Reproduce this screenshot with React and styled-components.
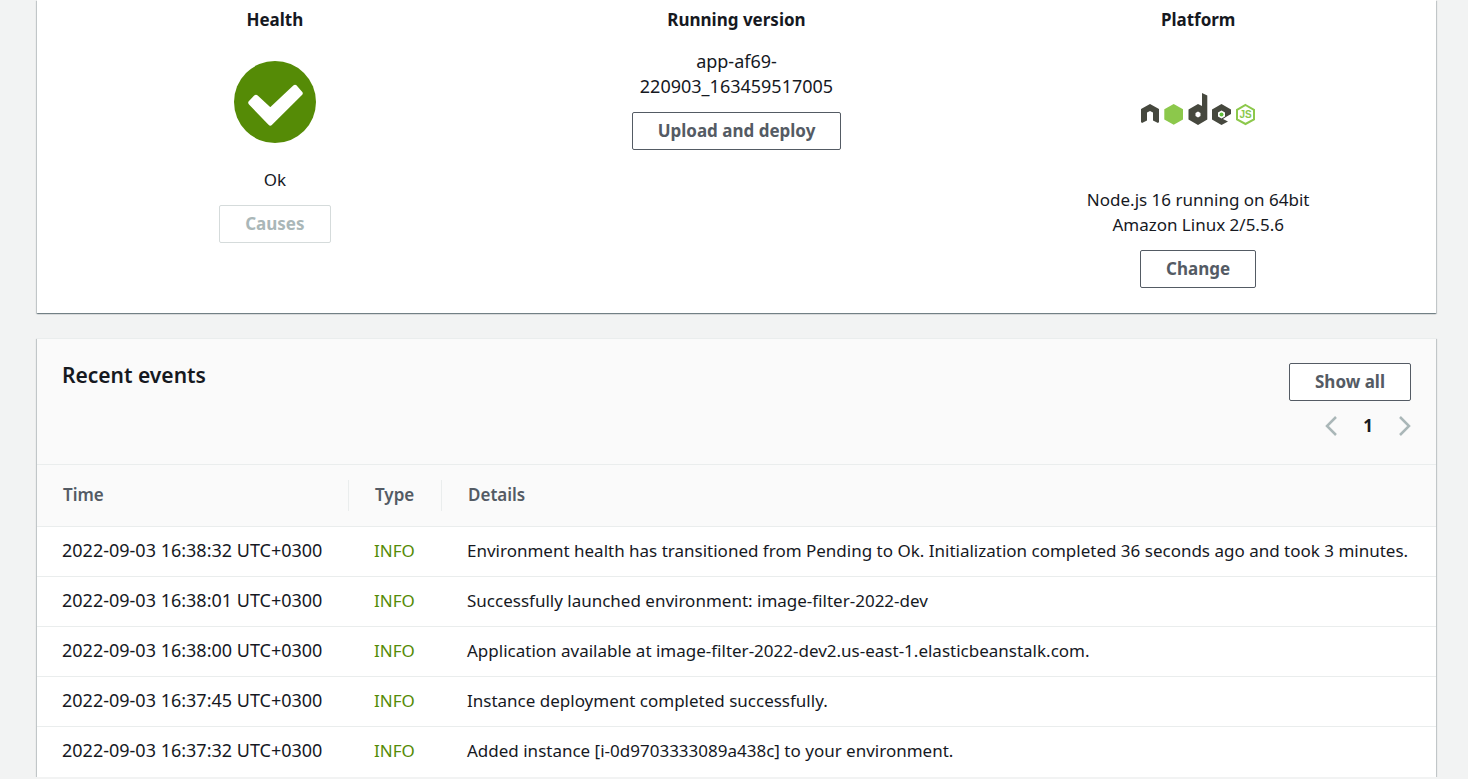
import React from 'react';
import styled, { createGlobalStyle } from 'styled-components';

const GlobalStyle = createGlobalStyle`
  *, *::before, *::after { box-sizing: border-box; }
  body {
    margin: 0;
    background: #f2f3f3;
    color: #16191f;
    font-family: "Noto Sans", "Open Sans", sans-serif;
    font-size: 17px;
    line-height: 25px;
  }
`;

const Page = styled.main`
  display: flex;
  flex-direction: column;
  gap: 25px;
  padding: 0 32px 0 37px;
`;

const Panel = styled.section`
  background: #fff;
  box-shadow: 0 1px 1px 0 rgba(0, 28, 36, 0.35),
    1px 1px 1px 0 rgba(0, 28, 36, 0.15),
    -1px 1px 1px 0 rgba(0, 28, 36, 0.15);
`;

const Overview = styled(Panel)`
  display: grid;
  grid-template-columns: repeat(3, 1fr);
  gap: 36px;
  padding: 7px 25px 25px;
`;

const EventsPanel = styled(Panel)`
  border-top: 1px solid #eaeded;
`;

const Summary = styled.div`
  display: flex;
  flex-direction: column;
  align-items: center;
  text-align: center;
`;

const SummaryTitle = styled.h3`
  margin: 0 0 17px;
  font-size: 17px;
  font-weight: 700;
  line-height: 25px;
`;

const Visual = styled.div`
  padding: 12px 0 24px;
  svg { display: block; }
`;

const SummaryText = styled.p`
  margin: 0 0 13px;
  max-width: 240px;
  font-size: ${(p) => (p.$numeric ? '18px' : '17px')};
`;

const Button = styled.button`
  height: 38px;
  padding: 0 25px;
  border: 1px solid #545b64;
  border-radius: 2px;
  background: #fff;
  color: #545b64;
  font: inherit;
  font-weight: 700;
  line-height: 34px;
  &:disabled {
    border-color: #d5dbdb;
    color: #aab7b8;
  }
`;

const EventsHeader = styled.header`
  display: flex;
  justify-content: space-between;
  align-items: flex-start;
  padding: 24px 25px 26px;
  background: #fafafa;
  border-bottom: 1px solid #eaeded;
`;

const EventsTitle = styled.h2`
  margin: 0;
  font-size: 21px;
  font-weight: 600;
  line-height: 25px;
`;

const Actions = styled.div`
  display: flex;
  flex-direction: column;
  align-items: flex-end;
  gap: 12px;
`;

const Pagination = styled.nav`
  display: flex;
  align-items: center;
  gap: 26px;
  font-weight: 700;
`;

const PageArrow = styled.button`
  display: flex;
  padding: 0;
  border: 0;
  background: none;
  color: #aab7b8;
`;

const Table = styled.table`
  width: 100%;
  table-layout: fixed;
  border-collapse: separate;
  border-spacing: 0;
`;

const HeadCell = styled.th`
  width: ${(p) => p.$width || 'auto'};
  padding: 15px 0;
  background: #fafafa;
  border-bottom: 1px solid #eaeded;
  text-align: left;
  font-weight: 600;
  color: #545b64;
`;

const HeadLabel = styled.div`
  padding: 0 0 2px 26px;
  line-height: 29px;
  border-right: ${(p) => (p.$divided ? '1px solid #eaeded' : '0')};
`;

const Cell = styled.td`
  height: 50px;
  padding: 0 0 2px 25px;
  border-bottom: 1px solid #eaeded;
  white-space: nowrap;
  font-size: ${(p) => (p.$numeric ? '18px' : '17px')};
  color: ${(p) => (p.$info ? '#558b06' : 'inherit')};
  tr:last-child > & { border-bottom-color: transparent; }
`;

const CheckIcon = () => (
  <svg width="82" height="82" viewBox="0 0 82 82" aria-hidden="true">
    <circle cx="41" cy="41" r="41" fill="#558b06" />
    <path
      d="M16.800 41.800L22 36.300L36.300 49.600L61 26.300L66.200 32.300L36.300 62Z"
      fill="#fff"
      stroke="#fff"
      strokeWidth="5"
      strokeLinejoin="round"
    />
  </svg>
);

const NodeLogo = () => (
  <svg width="116" height="102" viewBox="0 0 116 102" role="img" aria-label="Node.js">
    <g fill="#46483e" fillRule="evenodd">
      <path d="M1 61V48L10 43L19 48V61L18 62L13 59.500V51.500L10 50L7 51.500V59.500L2 62Z" />
      <path d="M62 32L67.300 34.500V58.500L58 64L48.500 58.500V48.500L58 43L62 45ZM58 50.500L55.500 52V55L58 56.500L60.500 55V52Z" />
      <path d="M81.500 43L91 48.500V53L85.500 56.300L83 58L88 60.500L81.500 64L72 58.500V48.500ZM81.500 49.500L78 51.500V55.500L81.500 57.500L85 55.500V51.500Z" />
    </g>
    <path d="M33.700 43L43 48.300V58.500L33.700 63.700L24.300 58.500V48.300Z" fill="#8cc84b" />
    <circle cx="81.500" cy="53.500" r="2" fill="#5fbf3a" />
    <path d="M105.500 44L114 48.900V58.300L105.500 63L97 58.300V48.900Z" fill="none" stroke="#8cc84b" strokeWidth="2" />
    <text x="105.500" y="57" textAnchor="middle" fontFamily="Liberation Sans, sans-serif" fontSize="10" fontWeight="700" fill="#8cc84b">JS</text>
  </svg>
);

const Chevron = ({ d }) => (
  <svg width="12" height="20" viewBox="0 0 12 20" aria-hidden="true">
    <path d={d} fill="none" stroke="currentColor" strokeWidth="2.500" />
  </svg>
);

const events = [
  ['2022-09-03 16:38:32 UTC+0300', 'Environment health has transitioned from Pending to Ok. Initialization completed 36 seconds ago and took 3 minutes.'],
  ['2022-09-03 16:38:01 UTC+0300', 'Successfully launched environment: image-filter-2022-dev'],
  ['2022-09-03 16:38:00 UTC+0300', 'Application available at image-filter-2022-dev2.us-east-1.elasticbeanstalk.com.'],
  ['2022-09-03 16:37:45 UTC+0300', 'Instance deployment completed successfully.'],
  ['2022-09-03 16:37:32 UTC+0300', 'Added instance [i-0d9703333089a438c] to your environment.'],
];

export default function App() {
  return (
    <>
      <GlobalStyle />
      <Page>
        <Overview>
          <Summary>
            <SummaryTitle>Health</SummaryTitle>
            <Visual><CheckIcon /></Visual>
            <SummaryText>Ok</SummaryText>
            <Button type="button" disabled>Causes</Button>
          </Summary>
          <Summary>
            <SummaryTitle>Running version</SummaryTitle>
            <SummaryText $numeric>app-af69-220903_163459517005</SummaryText>
            <Button type="button">Upload and deploy</Button>
          </Summary>
          <Summary>
            <SummaryTitle>Platform</SummaryTitle>
            <Visual><NodeLogo /></Visual>
            <SummaryText>Node.js 16 running on 64bit Amazon Linux 2/5.5.6</SummaryText>
            <Button type="button">Change</Button>
          </Summary>
        </Overview>
        <EventsPanel>
          <EventsHeader>
            <EventsTitle>Recent events</EventsTitle>
            <Actions>
              <Button type="button">Show all</Button>
              <Pagination aria-label="Events pages">
                <PageArrow type="button" disabled aria-label="Previous page"><Chevron d="M11 1L2 10L11 19" /></PageArrow>
                <span>1</span>
                <PageArrow type="button" disabled aria-label="Next page"><Chevron d="M1 1L10 10L1 19" /></PageArrow>
              </Pagination>
            </Actions>
          </EventsHeader>
          <Table>
            <thead>
              <tr>
                <HeadCell $width="312px"><HeadLabel $divided>Time</HeadLabel></HeadCell>
                <HeadCell $width="93px"><HeadLabel $divided>Type</HeadLabel></HeadCell>
                <HeadCell><HeadLabel>Details</HeadLabel></HeadCell>
              </tr>
            </thead>
            <tbody>
              {events.map(([time, details]) => (
                <tr key={time}>
                  <Cell $numeric>{time}</Cell>
                  <Cell $info>INFO</Cell>
                  <Cell>{details}</Cell>
                </tr>
              ))}
            </tbody>
          </Table>
        </EventsPanel>
      </Page>
    </>
  );
}
